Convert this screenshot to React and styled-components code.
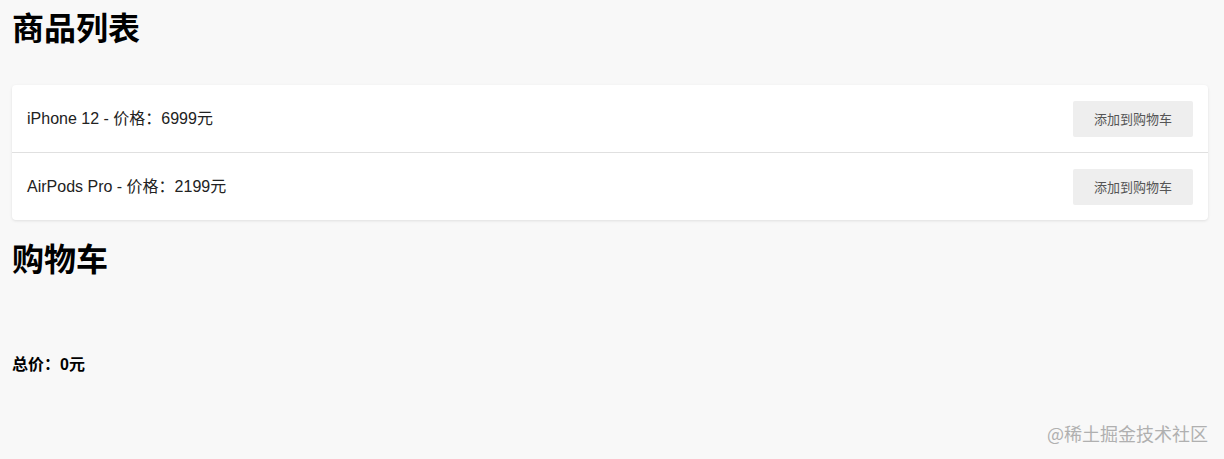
import React from "react";
import styled, { createGlobalStyle } from "styled-components";

const products = [
  { id: 1, name: "iPhone 12", price: 6999 },
  { id: 2, name: "AirPods Pro", price: 2199 },
];

const GlobalStyle = createGlobalStyle`
  html, body {
    margin: 0;
    padding: 0;
    background: #f8f8f8;
  }
  body {
    font-family: "Liberation Sans", Arial, "Noto Sans CJK SC", sans-serif;
    color: #000;
  }
`;

const App = () => {
  const [cart, setCart] = React.useState([]);
  const total = cart.reduce((sum, p) => sum + p.price, 0);

  return (
    <Page>
      <GlobalStyle />
      <Title>商品列表</Title>
      <ProductList>
        {products.map((p) => (
          <ProductRow key={p.id}>
            <ProductName>
              {p.name} - 价格：{p.price}元
            </ProductName>
            <AddButton type="button" onClick={() => setCart([...cart, p])}>
              添加到购物车
            </AddButton>
          </ProductRow>
        ))}
      </ProductList>
      <Title>购物车</Title>
      <CartList>
        {cart.map((p, i) => (
          <li key={i}>{p.name}</li>
        ))}
      </CartList>
      <Total>总价：{total}元</Total>
      <Watermark>@稀土掘金技术社区</Watermark>
    </Page>
  );
};

const Page = styled.div`
  position: relative;
  min-height: 459px;
  box-sizing: border-box;
  padding: 10px 16px 0 12px;
`;

const Title = styled.h1`
  margin: 0 0 21px;
  font: normal normal 700 32px/38px "Liberation Sans", "Noto Sans CJK SC", sans-serif;
`;

const ProductList = styled.ul`
  list-style: none;
  margin: 37px 0 21px;
  padding: 0;
  background: #fff;
  border-radius: 4px;
  box-shadow: 0 1px 3px rgba(0, 0, 0, 0.1);
  overflow: hidden;
`;

const ProductRow = styled.li`
  display: flex;
  align-items: center;
  justify-content: space-between;
  height: 67px;
  padding: 0 15px;

  & + & {
    border-top: 1px solid #e0e0e0;
  }
`;

const ProductName = styled.span`
  font: normal normal 400 16px/1.2 "Liberation Sans", "Noto Sans CJK SC", sans-serif;
  color: #222;
`;

const AddButton = styled.button`
  width: 120px;
  height: 36px;
  border: none;
  border-radius: 2px;
  background: #eeeeee;
  color: #555;
  font: normal normal 400 13px/1 "Noto Sans CJK SC", sans-serif;
  cursor: pointer;
`;

const CartList = styled.ul`
  list-style: none;
  margin: 0;
  padding: 0;
  min-height: 55px;
`;

const Total = styled.p`
  margin: 0;
  font: normal normal 700 16px/19px "Liberation Sans", "Noto Sans CJK SC", sans-serif;
`;

const Watermark = styled.div`
  position: absolute;
  right: 16px;
  bottom: 15px;
  font: normal normal 400 18px/22px "Noto Sans CJK SC", sans-serif;
  color: #b0b0b0;
`;

export default App;
